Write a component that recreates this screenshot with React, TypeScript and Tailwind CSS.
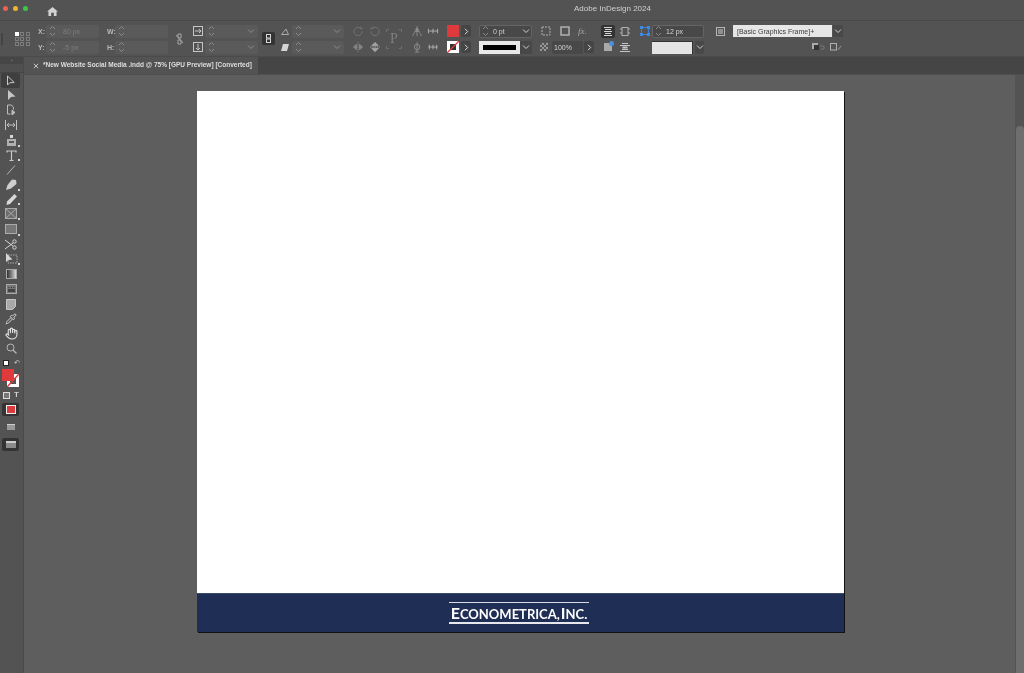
import React from "react";
import { Hand, Pipette } from "lucide-react";

const S = ({ w = 12, h = 12, vb = "0 0 12 12", children, c = "" }: { w?: number; h?: number; vb?: string; children: React.ReactNode; c?: string }) => (
  <svg width={w} height={h} viewBox={vb} className={"shrink-0 " + c} fill="none" stroke="currentColor" strokeWidth={1}>
    {children}
  </svg>
);

const Stepper = () => (
  <S w={7} h={12} vb="0 0 7 12" c="text-[#8a8a8a]">
    <path d="M1 4l2.5-2.5L6 4M1 8l2.5 2.5L6 8" />
  </S>
);

const Chevron = ({ c = "text-[#8d8d8d]" }: { c?: string }) => (
  <S w={8} h={6} vb="0 0 8 6" c={c}>
    <path d="M1 1.5l3 3 3-3" />
  </S>
);

const Field = ({ text = "", chevron = false, w = "w-[53px]" }: { text?: string; chevron?: boolean; w?: string }) => (
  <div className={"h-[13px] bg-[#5a5a5a] rounded-[2px] flex items-center pl-[3px] pr-[3px] shrink-0 " + w}>
    <Stepper />
    <span className="ml-[7px] text-[7px] leading-none text-[#7e7e7e] grow whitespace-nowrap">{text}</span>
    {chevron && <Chevron />}
  </div>
);

const Label = ({ t }: { t: string }) => <span className="w-[8px] shrink-0 text-[7px] font-bold leading-none text-[#b9b9b9]">{t}:</span>;

const ArrowBtn = () => (
  <div className="w-[10px] h-[12px] bg-[#454545] rounded-[2px] flex items-center justify-center text-[#dcdcdc]">
    <S w={5} h={7} vb="0 0 5 7"><path d="M1 .8l2.7 2.7L1 6.2" /></S>
  </div>
);

const Row = ({ children, c = "" }: { children: React.ReactNode; c?: string }) => <div className={"flex items-center h-[13px] " + c}>{children}</div>;

const ColTwo = ({ a, b, c = "" }: { a: React.ReactNode; b: React.ReactNode; c?: string }) => (
  <div className={"flex flex-col justify-between h-[29px] mt-[1px] shrink-0 " + c}>
    <Row>{a}</Row>
    <Row>{b}</Row>
  </div>
);

const RefGrid = () => (
  <div className="grid grid-cols-3 gap-[1px] w-[15px] shrink-0">
    {Array.from({ length: 9 }).map((_, i) => (
      <div key={i} className={i === 0 ? "w-[4px] h-[4px] bg-white" : "w-[4px] h-[4px] border border-[#7d7d7d]"} />
    ))}
  </div>
);

const tools: { h: string; icon: React.ReactNode; active?: boolean; corner?: boolean }[] = [
  { h: "h-[15px]", active: true, icon: <S w={10} h={12} vb="0 0 10 12" c="text-[#c8c8c8]"><path d="M1.5 1v9l2.2-2.2 4.5-.3z" /></S> },
  { h: "h-[14px]", icon: <svg width="9" height="12" viewBox="0 0 9 12"><path d="M1 1v10l3-3 4.5-.5z" fill="#c8c8c8" /></svg> },
  { h: "h-[15px]", icon: <S w={10} h={12} vb="0 0 10 12" c="text-[#bdbdbd]"><path d="M1.5 1h4l2 2.5v2M1.5 1v9h3" /><path d="M6 6v5l3-2.5z" fill="#bdbdbd" /></S> },
  { h: "h-[15px]", icon: <S w={12} h={10} vb="0 0 12 10" c="text-[#c0c0c0]"><path d="M.5 0v10M11.500 0v10M2 5h8M2 5l2-2M2 5l2 2M10 5L8 3M10 5L8 7" /></S> },
  { h: "h-[16px]", corner: true, icon: <svg width="11" height="11" viewBox="0 0 11 11"><path d="M1 4h9v7H1z" fill="#b0b0b0" /><path d="M3 6h5v2H3z" fill="#5a5a5a" /><path d="M4 0h3v3H4z" fill="#d5d5d5" /></svg> },
  { h: "h-[14px]", corner: true, icon: <S w={11} h={11} vb="0 0 11 11" c="text-[#c8c8c8]"><path d="M1 2.500V1h9v1.500M5.500 1v9.500M3.500 10.500h4" strokeWidth={1.200} /></S> },
  { h: "h-[15px]", icon: <S w={10} h={10} vb="0 0 10 10" c="text-[#b5b5b5]"><path d="M1 9.500L9 .5" /></S> },
  { h: "h-[15px]", corner: true, icon: <svg width="11" height="11" viewBox="0 0 11 11"><path d="M10 1L6 .5 1.500 6 0 11l5-1.500L10.500 5z" fill="#cfcfcf" /></svg> },
  { h: "h-[14px]", corner: true, icon: <svg width="11" height="11" viewBox="0 0 11 11"><path d="M8.500 0L11 2.500 4 10 .5 11 1 7.500z" fill="#d8d8d8" /></svg> },
  { h: "h-[15px]", corner: true, icon: <S w={12} h={11} vb="0 0 12 11" c="text-[#a9a9a9]"><rect x=".5" y=".5" width="11" height="10" fill="#6c6c6c" /><path d="M1 1l10 9M11 1L1 10" /></S> },
  { h: "h-[16px]", corner: true, icon: <div className="w-[12px] h-[10px] bg-[#777] border border-[#aaa]" /> },
  { h: "h-[14px]", icon: <S w={12} h={11} vb="0 0 12 11" c="text-[#d6d6d6]"><circle cx="9.500" cy="2.500" r="1.700" /><circle cx="9.500" cy="8.500" r="1.700" /><path d="M0 1l8 6M0 10l8-6" /></S> },
  { h: "h-[15px]", corner: true, icon: <svg width="13" height="12" viewBox="0 0 13 12"><rect x="3" y="2" width="9" height="8" fill="none" stroke="#aaa" strokeDasharray="1.500 1" /><path d="M1 0v9l2.500-2 4-.5z" fill="#d6d6d6" /></svg> },
  { h: "h-[15px]", icon: <div className="w-[11px] h-[10px] border border-[#aaa] bg-gradient-to-r from-[#333] to-[#ddd]" /> },
  { h: "h-[16px]", icon: <svg width="11" height="10" viewBox="0 0 11 10"><rect x=".5" y=".5" width="10" height="9" fill="#777" stroke="#aaa" /><path d="M2 5h7v3H2z" fill="#444" /><path d="M2.500 3.500h1M5 3.500h1M7.500 3.500h1" stroke="#333" /></svg> },
  { h: "h-[15px]", icon: <svg width="10" height="11" viewBox="0 0 10 11"><path d="M.5.5h9v7l-3 3h-6z" fill="#a8a8a8" stroke="#c5c5c5" /></svg> },
  { h: "h-[14px]", icon: <Pipette size={12} className="text-[#d0d0d0]" strokeWidth={2} /> },
  { h: "h-[15px]", icon: <Hand size={13} className="text-[#e6e6e6]" strokeWidth={2} /> },
  { h: "h-[14px]", icon: <S w={11} h={11} vb="0 0 11 11" c="text-[#b8b8b8]"><circle cx="4.500" cy="4.500" r="3.500" /><path d="M7 7l3.500 3.500" strokeWidth={1.300} /></S> },
];

const Tool = ({ t }: { t: (typeof tools)[number] }) => (
  <div className={"relative flex items-center justify-center w-[23px] shrink-0 " + t.h}>
    {t.active && <div className="absolute left-[1px] top-0 w-[19px] h-[15px] bg-[#3f3f3f] rounded-[2px]" />}
    <div className="relative -ml-[1px] flex items-center justify-center">{t.icon}</div>
    {t.corner && <div className="absolute right-[3px] bottom-[1px] w-[2px] h-[2px] bg-[#d5d5d5]" />}
  </div>
);

const FillStroke = () => (
  <div className="relative w-[23px] h-[18px] mt-[3px] shrink-0">
    <div className="absolute left-[7px] top-[5px] w-[12px] h-[13px] bg-white flex items-center justify-center">
      <div className="w-[6px] h-[6px] bg-[#555]" />
      <svg className="absolute inset-0" width="12" height="13" viewBox="0 0 12 13"><path d="M0 13L12 0" stroke="#e03a3a" strokeWidth={1.500} /></svg>
    </div>
    <div className="absolute left-[2px] top-0 w-[12px] h-[12px] bg-[#e03a3c]" />
  </div>
);

export default function App() {
  return (
    <div className="w-[1024px] h-[673px] overflow-hidden flex flex-col bg-[#5e5e5e] [font-family:'Liberation_Sans',Arial,sans-serif]">
      {/* Title bar */}
      <div className="h-[20px] shrink-0 bg-[#535353] flex items-center blur-[0.35px]">
        <div className="flex items-center gap-[5px] pl-[3px] -mt-[3px]">
          <span className="w-[5px] h-[5px] rounded-full bg-[#ee5f56]" />
          <span className="w-[5px] h-[5px] rounded-full bg-[#f0b52d]" />
          <span className="w-[5px] h-[5px] rounded-full bg-[#3cc648]" />
        </div>
        <svg className="ml-[19px] mt-[2px]" width="11" height="9" viewBox="0 0 12 10"><path d="M6 0l6 5h-1.500v5H7.500V6.500h-3V10H1.500V5H0z" fill="#d2d2d2" /></svg>
        <span className="ml-[516px] -mt-[3px] text-[8px] text-[#d0d0d0] whitespace-nowrap">Adobe InDesign 2024</span>
      </div>

      {/* Control panel */}
      <div className="h-[37px] shrink-0 bg-[#535353] border-t border-[#484848] border-b border-b-[#4b4b4b] flex items-center blur-[0.35px]">
        <div className="w-[2px] h-[12px] bg-[#444] ml-[1px] shrink-0" />
        <div className="ml-[12px]"><RefGrid /></div>
        <ColTwo c="ml-[8px]" a={<><Label t="X" /><Field text="80 px" /></>} b={<><Label t="Y" /><Field text="-5 px" /></>} />
        <ColTwo c="ml-[8px]" a={<><Label t="W" /><Field /></>} b={<><Label t="H" /><Field /></>} />
        <S w={9} h={12} vb="0 0 9 12" c="ml-[7px] text-[#a6a6a6]"><path d="M3 1h3v4H3zM3 7h3v4H3zM1 2l7 8" /></S>
        <ColTwo c="ml-[9px]" a={<><S w={10} h={10} vb="0 0 10 10" c="text-[#c5c5c5] mr-[2px]"><rect x=".5" y=".5" width="9" height="9" /><path d="M2 5h6M6 3l2 2-2 2" /></S><Field chevron /></>} b={<><S w={10} h={10} vb="0 0 10 10" c="text-[#c5c5c5] mr-[2px]"><rect x=".5" y=".5" width="9" height="9" /><path d="M5 2v6M3 6l2 2 2-2" /></S><Field chevron /></>} />
        <div className="ml-[4px] w-[13px] h-[13px] rounded-[2px] bg-[#333] flex items-center justify-center text-[#d8d8d8] shrink-0">
          <S w={5} h={9} vb="0 0 5 9"><rect x=".5" y=".5" width="4" height="3.500" /><rect x=".5" y="5" width="4" height="3.500" /></S>
        </div>
        <ColTwo c="ml-[6px]" a={<><svg className="mr-[3px] shrink-0" width="8" height="7" viewBox="0 0 8 7"><path d="M.5 6.500h7L5 1z" fill="none" stroke="#aaa" /></svg><Field chevron w="w-[52px]" /></>} b={<><svg className="mr-[3px] shrink-0" width="8" height="7" viewBox="0 0 8 7"><path d="M0 7l2-7h6L6 7z" fill="#d5d5d5" /></svg><Field chevron w="w-[52px]" /></>} />
        <ColTwo c="ml-[9px]"
          a={<div className="flex gap-[6px] text-[#757575]"><S w={11} h={11}><path d="M10 6a4.500 4.500 0 11-1.500-3.300M8.500 .5v2.500H11" /></S><S w={11} h={11}><path d="M1 6a4.500 4.500 0 101.500-3.300M2.500 .5v2.500H0" /></S></div>}
          b={<div className="flex gap-[6px] text-[#858585]"><S w={11} h={11}><path d="M5.500 0v11" strokeDasharray="1.500 1" /><path d="M4 2.500v6l-3.500-3zM7 2.500v6l3.500-3z" fill="currentColor" /></S><S w={11} h={11} c="text-[#a5a5a5]"><path d="M0 5.500h11" strokeDasharray="1.500 1" /><path d="M2 4h7L5.500.5zM2 7h7l-3.500 3.500z" fill="currentColor" /></S></div>} />
        <div className="ml-[5px] relative w-[16px] h-[20px] flex items-center justify-center text-[#7f7f7f] text-[14px] [font-family:'Liberation_Serif',serif] shrink-0">
          P
          <svg className="absolute inset-0" width="16" height="20" viewBox="0 0 16 20"><path d="M.5 3V.5H3M13 .5h2.500V3M.5 17v2.500H3M13 19.500h2.500V17" fill="none" stroke="#6f6f6f" /></svg>
        </div>
        <ColTwo c="ml-[10px]"
          a={<div className="flex gap-[4px] text-[#8d8d8d]"><S w={11} h={11}><path d="M5.500 0v3M1 11c0-3 2-3 2-5h5c0 2 2 2 2 5M5.500 6v5" /><circle cx="5.500" cy="4" r="1.500" fill="currentColor" /></S><S w={12} h={11} c="text-[#b3b3b3]"><path d="M1 5.500h10M1 3v5M6 3v5M11 3v5" /></S></div>}
          b={<div className="flex gap-[4px] text-[#8d8d8d]"><S w={11} h={11}><circle cx="5.500" cy="5.500" r="3" /><path d="M5.500 0v11M3 11h5" /></S><S w={12} h={11} c="text-[#b3b3b3]"><path d="M1 5.500h10M2 3v5M6 3v5M10 3v5" /></S></div>} />
        <ColTwo c="ml-[8px]"
          a={<><div className="w-[12px] h-[12px] bg-[#dc3a3c]" /><div className="ml-[2px]"><ArrowBtn /></div></>}
          b={<><div className="w-[12px] h-[12px] bg-white relative flex items-center justify-center"><div className="w-[6px] h-[6px] bg-[#333]" /><svg className="absolute inset-0" width="12" height="12" viewBox="0 0 12 12"><path d="M0 12L12 0" stroke="#e03a3a" strokeWidth={1.300} /></svg></div><div className="ml-[2px]"><ArrowBtn /></div></>} />
        <ColTwo c="ml-[8px]"
          a={<div className="w-[53px] h-[13px] rounded-[2px] bg-[#484848] flex items-center border border-[#646464]"><div className="w-[10px] flex justify-center text-[#cfcfcf]"><Stepper /></div><span className="ml-[3px] grow text-[7px] leading-none text-[#d2d2d2]">0 pt</span><div className="w-[10px] flex justify-center"><Chevron c="text-[#d0d0d0]" /></div></div>}
          b={<div className="w-[53px] h-[13px] flex items-center"><div className="w-[41px] h-[13px] bg-[#e8e8e8] flex items-center justify-center"><div className="w-[33px] h-[5px] bg-black" /></div><div className="w-[12px] h-[13px] bg-[#484848] flex items-center justify-center"><Chevron c="text-[#d0d0d0]" /></div></div>} />
        <ColTwo c="ml-[8px]"
          a={<div className="ml-[1px] flex items-center gap-[8px] text-[#b0b0b0]"><S w={11} h={10} vb="0 0 11 10"><rect x="1" y="1" width="8" height="8" strokeDasharray="2 1" /></S><S w={10} h={10} vb="0 0 10 10"><rect x="1" y="1" width="8" height="8" strokeWidth={1.500} /></S><span className="text-[9px] italic text-[#a8a8a8] [font-family:'Liberation_Serif',serif] leading-none">fx.</span></div>}
          b={<div className="flex items-center"><svg className="shrink-0" width="8" height="8" viewBox="0 0 8 8"><rect width="8" height="8" fill="#9a9a9a" /><path d="M0 0h2v2H0zM4 0h2v2H4zM2 2h2v2H2zM6 2h2v2H6zM0 4h2v2H0zM4 4h2v2H4zM2 6h2v2H2zM6 6h2v2H6z" fill="#555" /></svg><div className="ml-[4px] w-[31px] h-[13px] bg-[#484848] rounded-[2px] flex items-center pl-[2px] text-[7px] leading-none text-[#d5d5d5]">100%</div><div className="ml-[1px]"><ArrowBtn /></div></div>} />
        <ColTwo c="ml-[7px]"
          a={<><div className="w-[14px] h-[13px] bg-[#333] rounded-[2px] flex items-center justify-center text-[#d5d5d5]"><S w={10} h={9} vb="0 0 10 9"><path d="M1 .5h8M2 2.500h6M1 4.500h8M2 6.500h6M1 8.500h8" /></S></div><S w={10} h={9} vb="0 0 10 9" c="ml-[5px] text-[#b0b0b0]"><rect x="2" y=".5" width="6" height="8" /><path d="M0 2h2M0 6h2M8 2h2M8 6h2" /></S></>}
          b={<><div className="w-[14px] h-[13px] flex items-center justify-center relative"><div className="w-[8px] h-[8px] bg-[#aaa]" /><div className="absolute right-[1px] top-0 w-[5px] h-[5px] rounded-full bg-[#4a90e2]" /></div><S w={10} h={9} vb="0 0 10 9" c="ml-[5px] text-[#c5c5c5]"><path d="M2 .5h6M0 2.500h10M2 6.500h6M0 8.500h10" /><rect x="3" y="4" width="4" height="1" /></S></>} />
        <ColTwo c="ml-[10px]"
          a={<><svg className="shrink-0" width="10" height="10" viewBox="0 0 10 10"><rect x="1.500" y="1.500" width="7" height="7" fill="none" stroke="#3f7fd0" /><path d="M0 0h3v3H0zM7 0h3v3H7zM0 7h3v3H0zM7 7h3v3H7z" fill="#3f8ae0" /></svg><div className="ml-[2px] w-[52px] h-[13px] bg-[#484848] rounded-[2px] border border-[#646464] flex items-center pl-[2px]"><Stepper /><span className="ml-[4px] text-[7px] leading-none text-[#d5d5d5]">12 px</span></div></>}
          b={<div className="ml-[12px] flex items-center"><div className="w-[41px] h-[13px] bg-[#e4e4e4] border-t border-r border-[#333]" /><div className="ml-[2px] w-[9px] h-[13px] bg-[#484848] rounded-[2px] flex items-center justify-center"><Chevron c="text-[#d0d0d0]" /></div></div>} />
        <ColTwo c="ml-[12px]"
          a={<svg className="shrink-0" width="9" height="9" viewBox="0 0 9 9"><rect x=".5" y=".5" width="8" height="8" fill="none" stroke="#b5b5b5" /><rect x="2" y="2" width="5" height="5" fill="#8f8f8f" /></svg>}
          b={<div className="w-[9px] h-[9px]" />} />
        <ColTwo c="ml-[8px]"
          a={<><div className="w-[99px] h-[12px] bg-[#e6e6e6] flex items-center pl-[4px] text-[7px] leading-none text-[#3a3a3a] whitespace-nowrap">[Basic Graphics Frame]+</div><div className="ml-[1px] w-[10px] h-[12px] bg-[#484848] flex items-center justify-center"><Chevron c="text-[#d0d0d0]" /></div></>}
          b={<div className="ml-[79px] flex items-center gap-[5px]"><svg className="shrink-0" width="13" height="8" viewBox="0 0 13 8"><rect x="0" y="0" width="6" height="6" fill="#aaa" /><rect x="2" y="2" width="5" height="5" fill="#333" /><path d="M8 3h4v3H9" fill="none" stroke="#777" /></svg><svg className="shrink-0" width="12" height="8" viewBox="0 0 12 8"><rect x=".5" y=".5" width="6" height="6.500" fill="none" stroke="#b0b0b0" /><path d="M8 7l3-4" stroke="#999" /></svg></div>} />
      </div>

      {/* Tab row + workspace */}
      <div className="flex grow min-h-0">
        <div className="w-[24px] shrink-0 bg-[#535353] border-r border-[#4a4a4a] flex flex-col blur-[0.3px]">
          <div className="h-[7px] bg-[#464646] flex justify-center shrink-0 text-[#8a8a8a]">
            <span className="text-[4px] leading-[7px]">»</span>
          </div>
          <div className="h-[9px] shrink-0 border-b border-[#444] bg-[#4f4f4f]" />
          {tools.map((t, i) => <Tool key={i} t={t} />)}
          <div className="h-[7px] mt-[4px] shrink-0 flex items-center gap-[3px] pl-[3px]">
            <div className="w-[6px] h-[6px] bg-white border border-[#222]" />
            <span className="ml-[2px] text-[7px] leading-none text-[#cfcfcf]">↶</span>
          </div>
          <FillStroke />
          <div className="flex items-center h-[16px] shrink-0 pl-[3px] gap-[4px]">
            <div className="w-[7px] h-[7px] bg-[#777] border border-[#ddd]" />
            <span className="text-[8px] font-bold leading-none text-[#cfcfcf]">T</span>
          </div>
          <div className="ml-[2px] w-[17px] h-[13px] bg-[#333] rounded-[2px] flex items-center justify-center shrink-0">
            <div className="w-[10px] h-[9px] bg-[#dc3a3c] border border-[#eee]" />
          </div>
          <div className="h-[22px] flex items-center justify-center shrink-0 -ml-[2px]">
            <div className="w-[8px] h-[6px] bg-[#999] border-t border-[#ccc]" />
          </div>
          <div className="ml-[2px] w-[17px] h-[13px] bg-[#333] rounded-[2px] flex items-center justify-center shrink-0">
            <div className="w-[10px] h-[7px] bg-[#8a8a8a] border-t-2 border-[#ccc]" />
          </div>
        </div>

        <div className="flex flex-col grow min-w-0">
          <div className="h-[17px] shrink-0 bg-[#454545] flex">
            <div className="w-[234px] bg-[#535353] flex items-center pl-[9px] blur-[0.3px]">
              <S w={6} h={6} vb="0 0 6 6" c="text-[#c5c5c5]"><path d="M.8.8l4.400 4.400M5.200.8L.8 5.200" /></S>
              <span className="ml-[4px] text-[6.500px] font-bold leading-none text-[#dedede] whitespace-nowrap">*New Website Social Media .indd @ 75% [GPU Preview] [Converted]</span>
            </div>
          </div>
          <div className="flex grow min-h-0 border-t border-[#4f4f4f]">
            <div className="grow min-w-0 pt-[16px] pl-[173px]">
              <div className="w-[647px] h-[541px] bg-white flex flex-col justify-end shadow-[1px_1px_0_#111]">
                <div className="h-[39px] bg-[#1f2e54] border-t border-[#3c4a6e] flex items-center justify-center">
                  <div className="w-[140px] mr-[3px] pt-[2px] border-t border-b-2 border-t-[#d8dbe3] border-b-[#e6e8ee] flex items-baseline justify-center text-white font-bold leading-[15px] [font-family:Lato,sans-serif] whitespace-nowrap blur-[0.3px]">
                    <span className="text-[16px]">E</span>
                    <span className="text-[13px]">CONOMETRICA,</span>
                    <span className="text-[16px] ml-[1px]">I</span>
                    <span className="text-[13px]">NC.</span>
                  </div>
                </div>
              </div>
            </div>
            <div className="w-[9px] shrink-0 bg-[#535353] flex flex-col pl-[1px] pt-[51px]">
              <div className="grow bg-[#6e6e6e] rounded-t-[4px]" />
            </div>
          </div>
        </div>
      </div>
    </div>
  );
}
